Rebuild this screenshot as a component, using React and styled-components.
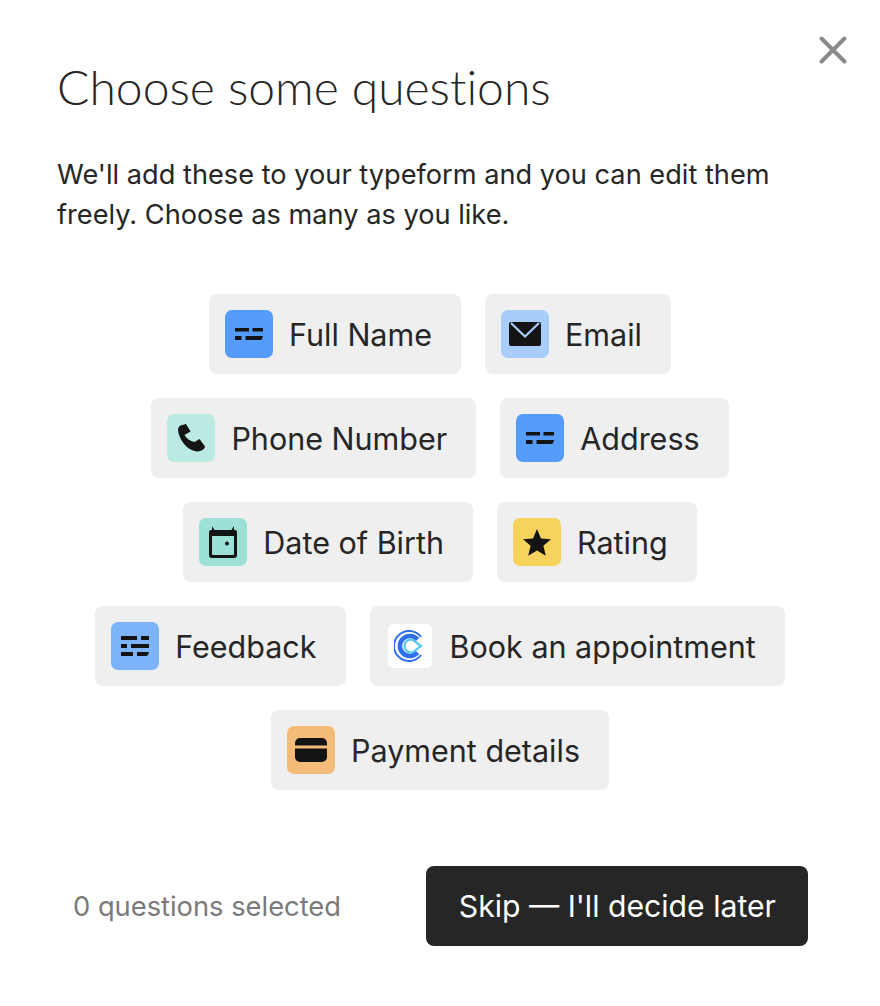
import styled, { createGlobalStyle } from "styled-components";

const GlobalStyle = createGlobalStyle`
  html, body {
    margin: 0;
    padding: 0;
    background: #fff;
  }
  * {
    box-sizing: border-box;
  }
`;

const IdIcon = () => (
  <svg width="28" height="12" viewBox="0 0 28 12">
    <path fill="#141414" d="M0 0h14v3.500H0zM17.500 0H28v3.500H17.500zM0 8h6.500v4H0zM10.500 8H28l-.8 2.500q-.5 1.500-2 1.500H10.500z" />
  </svg>
);

const MailIcon = () => (
  <svg width="32" height="24" viewBox="0 0 32 24">
    <path fill="#141414" d="M2 0h28a2 2 0 0 1 2 2v20a2 2 0 0 1-2 2H2a2 2 0 0 1-2-2V2a2 2 0 0 1 2-2z" />
    <path fill="none" stroke="#a9cdfb" strokeWidth="2.200" d="M2 1l14 13.500L30 1" />
  </svg>
);

const PhoneIcon = () => (
  <svg width="27" height="28" viewBox="0 0 27 28">
    <path fill="#141414" d="M0 6C0 4 1 2.500 2.500 1.500L8 0l4.500 7.500-6 3.500c2 3.500 5.500 6 10 7l5-3L27 22.500c-.5 2-1.500 3-3 3.700-2 1-4 1.300-5.500 1.300C9 26 1 16 0 6z" />
  </svg>
);

const CalendarIcon = () => (
  <svg width="28" height="32" viewBox="0 0 28 32">
    <path fill="#141414" d="M0 6a2 2 0 0 1 2-2h1V0l2.500 4h17L25 0v4h1a2 2 0 0 1 2 2v23a3 3 0 0 1-3 3H3a3 3 0 0 1-3-3z" />
    <path fill="#9de0d6" d="M3 10h22v18a1 1 0 0 1-1 1H4a1 1 0 0 1-1-1z" />
    <circle cx="18" cy="17.500" r="2" fill="#141414" />
  </svg>
);

const StarIcon = () => (
  <svg width="28" height="27" viewBox="0 0 28 27">
    <path fill="#141414" d="M14 0l4 9.500 10 .8-7.600 6.500 2.400 10L14 21.400 5.200 26.800l2.400-10L0 10.300l10-.8z" />
  </svg>
);

const FeedbackIcon = () => (
  <svg width="28" height="20" viewBox="0 0 28 20">
    <path fill="#141414" d="M0 0h16v4H0zM20 0h8v4h-8zM0 8h6v4H0zM10 8h18v4H10zM0 16h12v4H0zM16 16h12l-.6 2q-.6 2-2.400 2h-9z" />
  </svg>
);

const CalendlyIcon = () => (
  <svg width="32" height="32" viewBox="0 0 32 32" fill="none">
    <path stroke="#2f6fed" strokeWidth="2" d="M27 7A15 15 0 1 0 27 25" />
    <path stroke="#2f6fed" strokeWidth="4.500" d="M23.500 9.500A10 10 0 1 0 23.500 22.500" />
    <path stroke="#4fc8f0" strokeWidth="2.200" d="M28 16c-4 0-6-6-11-6.500a6.500 6.500 0 0 0 0 13c5-.5 7-6.500 11-6.500" />
  </svg>
);

const CardIcon = () => (
  <svg width="32" height="24" viewBox="0 0 32 24">
    <path fill="#141414" d="M5 0h22a5 5 0 0 1 5 5v2.500H0V5a5 5 0 0 1 5-5zM0 10.500h32V19a5 5 0 0 1-5 5H5a5 5 0 0 1-5-5z" />
  </svg>
);

const questions = [
  { label: "Full Name", color: "#549bfa", icon: <IdIcon /> },
  { label: "Email", color: "#a9cdfb", icon: <MailIcon /> },
  { label: "Phone Number", color: "#bbeae3", icon: <PhoneIcon /> },
  { label: "Address", color: "#549bfa", icon: <IdIcon /> },
  { label: "Date of Birth", color: "#9de0d6", icon: <CalendarIcon /> },
  { label: "Rating", color: "#f7d25c", icon: <StarIcon /> },
  { label: "Feedback", color: "#7db3f9", icon: <FeedbackIcon /> },
  { label: "Book an appointment", color: "#ffffff", inset: true, icon: <CalendlyIcon /> },
  { label: "Payment details", color: "#f4bc78", icon: <CardIcon /> },
];

const App = () => {
  return (
    <Modal>
      <GlobalStyle />
      <CloseButton aria-label="Close">
        <svg width="30" height="30" viewBox="0 0 30 30">
          <path stroke="#8a8a8a" strokeWidth="4" strokeLinecap="round" d="M3.500 3.500l23 23M26.500 3.500l-23 23" />
        </svg>
      </CloseButton>

      <Title>Choose some questions</Title>
      <Intro>
        We'll add these to your typeform and you can edit them freely. Choose as
        many as you like.
      </Intro>

      <Chips>
        {questions.map((q) => (
          <Chip key={q.label}>
            <IconBox color={q.color} $inset={q.inset}>{q.icon}</IconBox>
            {q.label}
          </Chip>
        ))}
      </Chips>

      <Footer>
        <Count>0 questions selected</Count>
        <SkipButton>Skip — I'll decide later</SkipButton>
      </Footer>
    </Modal>
  );
};

export default App;

const Modal = styled.div`
  position: relative;
  width: 880px;
  height: 1006px;
  padding: 55px 57px 0;
  background: #fff;
  color: #262626;
  font-family: Inter, "Liberation Sans", sans-serif;
`;

const CloseButton = styled.button`
  position: absolute;
  top: 35px;
  right: 32px;
  width: 30px;
  height: 30px;
  padding: 0;
  border: 0;
  background: none;
  display: flex;
`;

const Title = styled.h1`
  margin: 0;
  font-family: Lato, sans-serif;
  font-size: 48px;
  font-weight: 300;
  line-height: 64px;
  font-variant-ligatures: none;
`;

const Intro = styled.p`
  margin: 36px 0 0;
  font-size: 27.2px;
  line-height: 40px;
`;

const Chips = styled.div`
  margin-top: 59px;
  display: flex;
  flex-wrap: wrap;
  justify-content: center;
  gap: 24px;
`;

const Chip = styled.div`
  display: flex;
  align-items: center;
  gap: 16px;
  height: 80px;
  padding: 0 29px 0 16px;
  border-radius: 8px;
  background: #efefef;
  font-size: 30.5px;
`;

const IconBox = styled.span`
  display: flex;
  align-items: center;
  justify-content: center;
  width: 48px;
  height: 48px;
  padding: ${({ $inset }) => ($inset ? "2px" : "0")};
  border-radius: 7px;
  background: ${({ color }) => color};
  background-clip: content-box;
`;

const Footer = styled.div`
  margin-top: 76px;
  padding: 0 15px 0 16px;
  display: flex;
  align-items: center;
  justify-content: space-between;
`;

const Count = styled.span`
  font-size: 27.3px;
  color: #7a7a7a;
`;

const SkipButton = styled.button`
  height: 80px;
  padding: 0 32px 0 33px;
  border: 0;
  border-radius: 8px;
  background: #262626;
  color: #fff;
  font-family: inherit;
  font-size: 30.2px;
`;
